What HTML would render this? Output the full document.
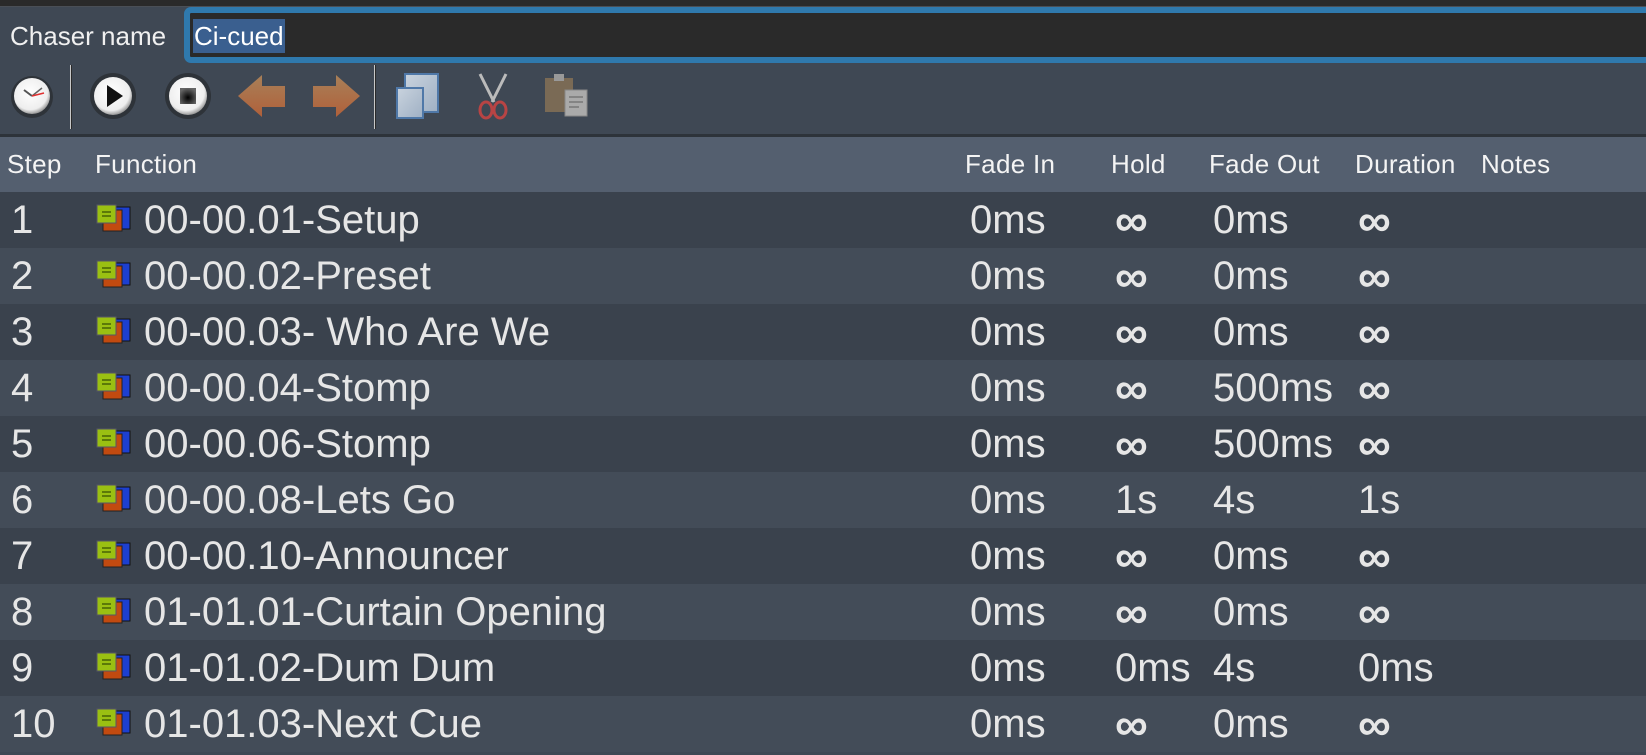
<!DOCTYPE html>
<html><head><meta charset="utf-8"><style>
*{margin:0;padding:0;box-sizing:border-box}
body{width:1646px;height:710px;overflow:hidden;background:#3f4854;font-family:"Liberation Sans",sans-serif;color:#ececec;position:relative}
.abs{position:absolute}
#top{left:0;top:0;width:1646px;height:7px;background:#2a2a2a;border-bottom:1px solid #4a4f56}
#lbl{left:10px;top:19px;font-size:26px;line-height:34px;color:#f0f0f0}
#inp{left:184px;top:7px;width:1480px;height:56px;border:6px solid #2f79ad;border-radius:7px;background:#2a2a2a;border-right:none}
#sel{left:193px;top:19px;height:34px;background:#3a5f8f;color:#fff;font-size:26px;line-height:34px;padding:0 1px}
.sep{width:2px;height:64px;top:65px;background:#c8c8c8;border-right:1px solid #2a2a2a}
#line{left:0;top:134px;width:1646px;height:3px;background:#2d333a}
#hdr{left:0;top:137px;width:1646px;height:55px;background:#545f6f}
.h{top:137px;font-size:26px;line-height:55px;color:#f4f4f4;letter-spacing:0.3px}
.row{left:0;width:1646px;height:56px}
.r0{background:#3a424d}.r1{background:#434c58}
.c{font-size:40px;line-height:56px;color:#e6e6e6;position:absolute;top:0}
.inf{font-size:46px;font-weight:bold;line-height:56px}
</style></head><body>
<div id="top" class="abs"></div>
<div id="lbl" class="abs">Chaser name</div>
<div id="inp" class="abs"></div>
<div id="sel" class="abs">Ci-cued</div>

<svg class="abs" style="left:0;top:62px" width="600" height="72">
 <defs>
  <radialGradient id="w" cx="45%" cy="40%" r="60%"><stop offset="0" stop-color="#fff"/><stop offset="0.8" stop-color="#eee"/><stop offset="1" stop-color="#999"/></radialGradient>
  <radialGradient id="s" cx="50%" cy="60%" r="60%"><stop offset="0" stop-color="#000"/><stop offset="1" stop-color="#666"/></radialGradient>
  <linearGradient id="ar" x1="0" y1="0" x2="0" y2="1"><stop offset="0" stop-color="#a88058"/><stop offset="1" stop-color="#b0603a"/></linearGradient>
  <linearGradient id="cp" x1="0" y1="0" x2="1" y2="1"><stop offset="0" stop-color="#c9d3de"/><stop offset="1" stop-color="#9fb0c4"/></linearGradient>
 </defs>
 <circle cx="32" cy="35" r="21" fill="#2e3339"/>
 <circle cx="32" cy="34" r="18" fill="url(#w)"/>
 <line x1="32" y1="34" x2="24" y2="28" stroke="#555" stroke-width="2"/>
 <line x1="32" y1="34" x2="42" y2="26" stroke="#666" stroke-width="1.5"/>
 <line x1="32" y1="34" x2="44" y2="31" stroke="#e03030" stroke-width="1.5"/>
 <circle cx="113" cy="34" r="23" fill="#2e3339"/>
 <circle cx="113" cy="34" r="19" fill="url(#w)"/>
 <path d="M107 23 L123 34 L107 45 Z" fill="#111"/>
 <circle cx="188" cy="34" r="23" fill="#2e3339"/>
 <circle cx="188" cy="34" r="19" fill="url(#w)"/>
 <rect x="180" y="26" width="16" height="16" fill="url(#s)"/>
 <path d="M238 34 L262 13 L262 24 L285 24 L285 45 L262 45 L262 55 Z" fill="url(#ar)"/>
 <path d="M360 34 L336 13 L336 24 L313 24 L313 45 L336 45 L336 55 Z" fill="url(#ar)"/>
 <rect x="405" y="12" width="33" height="38" fill="url(#cp)" stroke="#4f78a8" stroke-width="2"/>
 <rect x="397" y="26" width="26" height="30" fill="url(#cp)" stroke="#4f78a8" stroke-width="2"/>
 <path d="M480 12 L494 40 M506 12 L492 40" stroke="#bbb" stroke-width="3"/>
 <ellipse cx="486" cy="48" rx="6" ry="8" fill="none" stroke="#b84444" stroke-width="3"/>
 <ellipse cx="500" cy="48" rx="6" ry="8" fill="none" stroke="#b84444" stroke-width="3"/>
 <rect x="545" y="16" width="28" height="34" fill="#7a6a55"/>
 <rect x="554" y="12" width="10" height="7" fill="#999"/>
 <rect x="565" y="28" width="22" height="26" fill="#aaa" stroke="#888"/>
 <path d="M569 35h14M569 40h14M569 45h10" stroke="#777" stroke-width="1.5"/>
</svg>
<div class="abs sep" style="left:70px"></div>
<div class="abs sep" style="left:374px"></div>
<div id="line" class="abs"></div>
<div id="hdr" class="abs"></div>
<div class="abs h" style="left:7px">Step</div>
<div class="abs h" style="left:95px">Function</div>
<div class="abs h" style="left:965px">Fade In</div>
<div class="abs h" style="left:1111px">Hold</div>
<div class="abs h" style="left:1209px">Fade Out</div>
<div class="abs h" style="left:1355px">Duration</div>
<div class="abs h" style="left:1481px">Notes</div>

<div id="rows"></div>
<script>
var d=[["1","00-00.01-Setup","0ms","∞","0ms","∞"],["2","00-00.02-Preset","0ms","∞","0ms","∞"],["3","00-00.03- Who Are We","0ms","∞","0ms","∞"],["4","00-00.04-Stomp","0ms","∞","500ms","∞"],["5","00-00.06-Stomp","0ms","∞","500ms","∞"],["6","00-00.08-Lets Go","0ms","1s","4s","1s"],["7","00-00.10-Announcer","0ms","∞","0ms","∞"],["8","01-01.01-Curtain Opening","0ms","∞","0ms","∞"],["9","01-01.02-Dum Dum","0ms","0ms","4s","0ms"],["10","01-01.03-Next Cue","0ms","∞","0ms","∞"]];
var ic='<svg class="abs" style="left:96px;top:12px" width="36" height="32"><rect x="20" y="3" width="14" height="22" fill="#1d3fd0" stroke="#111"/><rect x="7" y="6" width="19" height="21" fill="#c24a10" stroke="#222"/><rect x="1" y="1" width="19" height="18" fill="#9ac012" stroke="#556"/><path d="M6 8h9M6 12h9" stroke="#5c7a08" stroke-width="2"/></svg>';
function v(s){return s=="∞"?'<span class="inf">∞</span>':s;}
var h='';
d.forEach(function(r,i){var y=192+i*56;
h+='<div class="abs row r'+(i%2)+'" style="top:'+y+'px"><span class="c" style="left:11px">'+r[0]+'</span>'+ic+'<span class="c" style="left:144px">'+r[1]+'</span><span class="c" style="left:970px">'+r[2]+'</span><span class="c" style="left:1115px">'+v(r[3])+'</span><span class="c" style="left:1213px">'+r[4]+'</span><span class="c" style="left:1358px">'+v(r[5])+'</span></div>';});
document.getElementById('rows').innerHTML=h;
</script>
</body></html>
